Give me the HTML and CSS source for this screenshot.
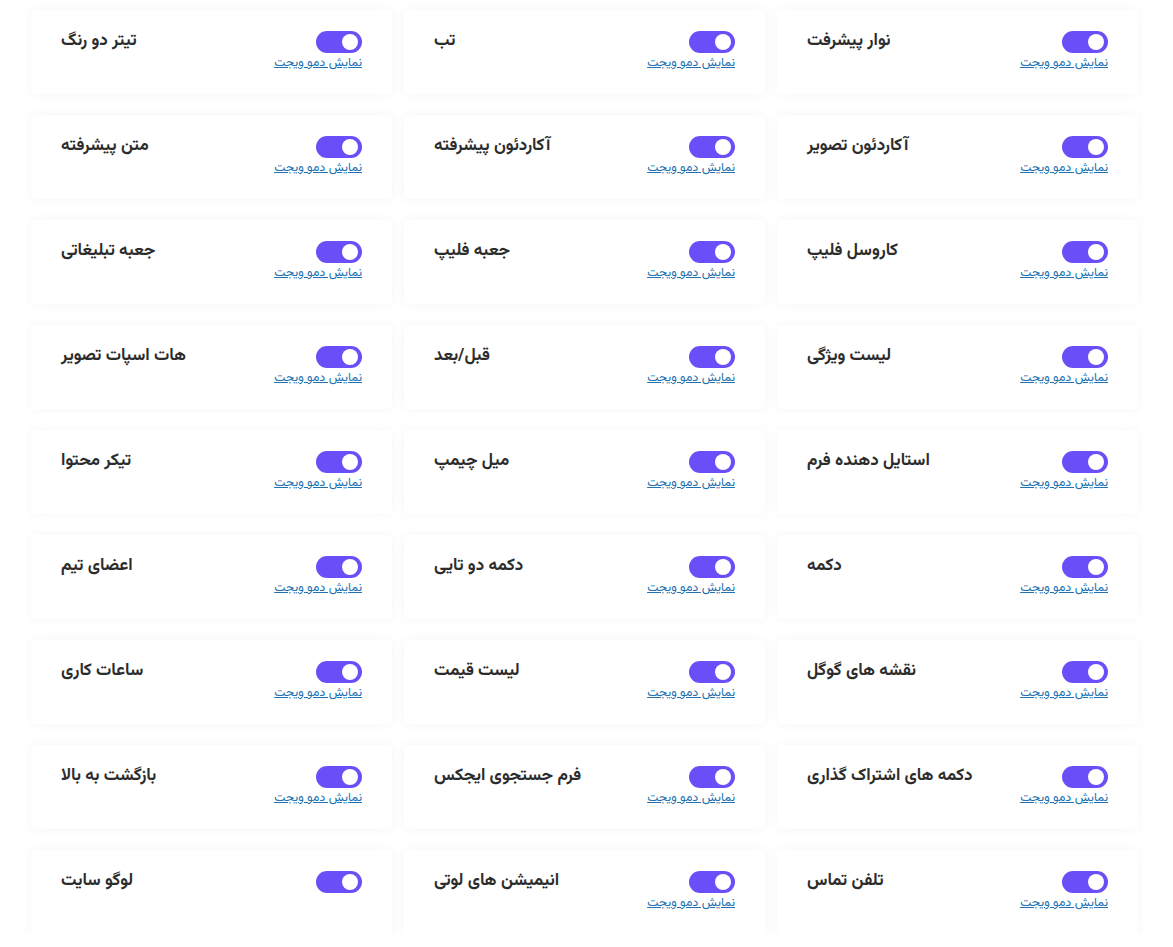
FILE: index.html
```html
<!DOCTYPE html>
<html lang="fa" dir="rtl">
<head>
<meta charset="utf-8">
<title>ویجت ها</title>
<link rel="stylesheet" href="styles.css">
</head>
<body>
<div class="grid">
  <div class="card"><div class="ctrl"><span class="toggle"><span class="knob"></span></span><a class="demo" href="#">نمایش دمو ویجت</a></div><div class="title">نوار پیشرفت</div></div>
  <div class="card"><div class="ctrl"><span class="toggle"><span class="knob"></span></span><a class="demo" href="#">نمایش دمو ویجت</a></div><div class="title">تب</div></div>
  <div class="card"><div class="ctrl"><span class="toggle"><span class="knob"></span></span><a class="demo" href="#">نمایش دمو ویجت</a></div><div class="title">تیتر دو رنگ</div></div>

  <div class="card"><div class="ctrl"><span class="toggle"><span class="knob"></span></span><a class="demo" href="#">نمایش دمو ویجت</a></div><div class="title">آکاردئون تصویر</div></div>
  <div class="card"><div class="ctrl"><span class="toggle"><span class="knob"></span></span><a class="demo" href="#">نمایش دمو ویجت</a></div><div class="title">آکاردئون پیشرفته</div></div>
  <div class="card"><div class="ctrl"><span class="toggle"><span class="knob"></span></span><a class="demo" href="#">نمایش دمو ویجت</a></div><div class="title">متن پیشرفته</div></div>

  <div class="card"><div class="ctrl"><span class="toggle"><span class="knob"></span></span><a class="demo" href="#">نمایش دمو ویجت</a></div><div class="title">کاروسل فلیپ</div></div>
  <div class="card"><div class="ctrl"><span class="toggle"><span class="knob"></span></span><a class="demo" href="#">نمایش دمو ویجت</a></div><div class="title">جعبه فلیپ</div></div>
  <div class="card"><div class="ctrl"><span class="toggle"><span class="knob"></span></span><a class="demo" href="#">نمایش دمو ویجت</a></div><div class="title">جعبه تبلیغاتی</div></div>

  <div class="card"><div class="ctrl"><span class="toggle"><span class="knob"></span></span><a class="demo" href="#">نمایش دمو ویجت</a></div><div class="title">لیست ویژگی</div></div>
  <div class="card"><div class="ctrl"><span class="toggle"><span class="knob"></span></span><a class="demo" href="#">نمایش دمو ویجت</a></div><div class="title">قبل/بعد</div></div>
  <div class="card"><div class="ctrl"><span class="toggle"><span class="knob"></span></span><a class="demo" href="#">نمایش دمو ویجت</a></div><div class="title">هات اسپات تصویر</div></div>

  <div class="card"><div class="ctrl"><span class="toggle"><span class="knob"></span></span><a class="demo" href="#">نمایش دمو ویجت</a></div><div class="title">استایل دهنده فرم</div></div>
  <div class="card"><div class="ctrl"><span class="toggle"><span class="knob"></span></span><a class="demo" href="#">نمایش دمو ویجت</a></div><div class="title">میل چیمپ</div></div>
  <div class="card"><div class="ctrl"><span class="toggle"><span class="knob"></span></span><a class="demo" href="#">نمایش دمو ویجت</a></div><div class="title">تیکر محتوا</div></div>

  <div class="card"><div class="ctrl"><span class="toggle"><span class="knob"></span></span><a class="demo" href="#">نمایش دمو ویجت</a></div><div class="title">دکمه</div></div>
  <div class="card"><div class="ctrl"><span class="toggle"><span class="knob"></span></span><a class="demo" href="#">نمایش دمو ویجت</a></div><div class="title">دکمه دو تایی</div></div>
  <div class="card"><div class="ctrl"><span class="toggle"><span class="knob"></span></span><a class="demo" href="#">نمایش دمو ویجت</a></div><div class="title">اعضای تیم</div></div>

  <div class="card"><div class="ctrl"><span class="toggle"><span class="knob"></span></span><a class="demo" href="#">نمایش دمو ویجت</a></div><div class="title">نقشه های گوگل</div></div>
  <div class="card"><div class="ctrl"><span class="toggle"><span class="knob"></span></span><a class="demo" href="#">نمایش دمو ویجت</a></div><div class="title">لیست قیمت</div></div>
  <div class="card"><div class="ctrl"><span class="toggle"><span class="knob"></span></span><a class="demo" href="#">نمایش دمو ویجت</a></div><div class="title">ساعات کاری</div></div>

  <div class="card"><div class="ctrl"><span class="toggle"><span class="knob"></span></span><a class="demo" href="#">نمایش دمو ویجت</a></div><div class="title">دکمه های اشتراک گذاری</div></div>
  <div class="card"><div class="ctrl"><span class="toggle"><span class="knob"></span></span><a class="demo" href="#">نمایش دمو ویجت</a></div><div class="title">فرم جستجوی ایجکس</div></div>
  <div class="card"><div class="ctrl"><span class="toggle"><span class="knob"></span></span><a class="demo" href="#">نمایش دمو ویجت</a></div><div class="title">بازگشت به بالا</div></div>

  <div class="card"><div class="ctrl"><span class="toggle"><span class="knob"></span></span><a class="demo" href="#">نمایش دمو ویجت</a></div><div class="title">تلفن تماس</div></div>
  <div class="card"><div class="ctrl"><span class="toggle"><span class="knob"></span></span><a class="demo" href="#">نمایش دمو ویجت</a></div><div class="title">انیمیشن های لوتی</div></div>
  <div class="card"><div class="ctrl"><span class="toggle"><span class="knob"></span></span></div><div class="title">لوگو سایت</div></div>
</div>
</body>
</html>
```

FILE: styles.css
```css
html, body {
  margin: 0;
  padding: 0;
  background: #ffffff;
}
body {
  font-family: "Vazirmatn", "Noto Sans Arabic", "DejaVu Sans", sans-serif;
  color: #2c2c2c;
}
.grid {
  display: grid;
  grid-template-columns: repeat(3, 361px);
  column-gap: 12px;
  row-gap: 21px;
  padding: 10px 35px 0 32px;
  direction: rtl;
}
.card {
  height: 84px;
  box-sizing: border-box;
  background: #ffffff;
  border-radius: 3px;
  box-shadow: 0 0 12px rgba(0, 0, 0, 0.045);
  padding: 21px 30px 0 30px;
  display: flex;
  justify-content: space-between;
  align-items: flex-start;
}
.ctrl {
  display: flex;
  flex-direction: column;
  align-items: flex-start;
}
.toggle {
  display: block;
  width: 46px;
  height: 22px;
  border-radius: 11px;
  background: #6a4ff8;
  position: relative;
}
.knob {
  position: absolute;
  top: 3px;
  right: 4px;
  width: 16px;
  height: 16px;
  border-radius: 50%;
  background: #ffffff;
}
.demo {
  margin-top: 2px;
  font-size: 12.5px;
  line-height: 16px;
  color: #2271b1;
  text-decoration: underline;
}
.title {
  font-size: 17px;
  font-weight: bold;
  line-height: 20px;
  color: #2c2c2c;
  margin-top: 0;
}
```
